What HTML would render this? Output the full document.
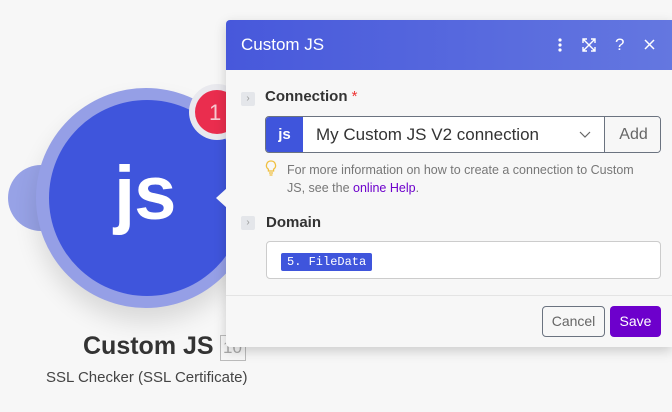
<!DOCTYPE html>
<html><head><style>
*{box-sizing:border-box;margin:0;padding:0}
body{width:672px;height:412px;overflow:hidden;background:#f7f7f7;font-family:"Liberation Sans",sans-serif;position:relative}
.abs{position:absolute}
</style></head><body>
<div class="abs" style="left:8px;top:165px;width:66px;height:66px;border-radius:50%;background:#97a2e6"></div>
<div class="abs" style="left:36px;top:88px;width:220px;height:220px;border-radius:50%;background:#959fe6;box-shadow:0 14px 24px rgba(0,0,0,.12)"></div>
<div class="abs" style="left:49px;top:100px;width:196px;height:196px;border-radius:50%;background:#3f55dc"></div>
<div class="abs" style="left:114px;top:150px;color:#fff;font-weight:bold;font-size:76px;letter-spacing:-1px">js</div>
<div class="abs" style="left:189px;top:84px;width:56px;height:56px;border-radius:50%;background:#e9e9ee"></div>
<div class="abs" style="left:195px;top:90px;width:44px;height:44px;border-radius:50%;background:#ea2d4e;color:#f7c9d1;font-size:22px;padding:10px 0 0 14px">1</div>
<div class="abs" style="left:83px;top:332px;font-size:25px;font-weight:bold;color:#333">Custom JS</div>
<div class="abs" style="left:220px;top:335px;width:26px;height:26px;border:1px solid #bbb;color:#aaa;font-size:17px;padding:2px 0 0 2px">10</div>
<div class="abs" style="left:46px;top:369px;font-size:15px;color:#444">SSL Checker (SSL Certificate)</div>

<div class="abs" style="left:226px;top:20px;width:446px;height:327px;background:#f7f7f7;box-shadow:0 4px 12px rgba(0,0,0,.18);border-radius:4px 0 0 4px;overflow:hidden">
 <div style="height:50px;background:linear-gradient(90deg,#4758db,#6477e0);color:#fff;font-size:17px;padding:15px 0 0 15px;position:relative">Custom JS
  <svg class="abs" style="left:332px;top:18px" width="4" height="14" viewBox="0 0 4 14" fill="#fff"><circle cx="2" cy="2" r="1.6"/><circle cx="2" cy="7" r="1.6"/><circle cx="2" cy="12" r="1.6"/></svg>
  <svg class="abs" style="left:356px;top:18px" width="14" height="14" viewBox="0 0 14 14" fill="none" stroke="#fff" stroke-width="1.4"><path d="M1 5V1h4M9 1h4v4M13 9v4H9M5 13H1V9M1 1l12 12M13 1L1 13"/></svg>
  <span class="abs" style="left:389px;top:15px;font-size:17px">?</span>
  <svg class="abs" style="left:418px;top:19px" width="11" height="11" viewBox="0 0 11 11" stroke="#fff" stroke-width="1.5"><path d="M1 1l9 9M10 1L1 10"/></svg>
 </div>
 <div class="abs" style="left:15px;top:72px;width:14px;height:14px;background:#e4e6ea;border-radius:2px;color:#999;font-size:10px;text-align:center;line-height:14px">›</div>
 <div class="abs" style="left:39px;top:68px;font-size:15px;font-weight:bold;color:#333">Connection <span style="color:#e33;font-weight:normal">*</span></div>
 <div class="abs" style="left:39px;top:96px;width:396px;height:37px;border:1px solid #6b7380;border-radius:4px;background:#fff;overflow:hidden">
  <div class="abs" style="left:0;top:0;width:37px;height:35px;background:#3f55dc;color:#fff;font-weight:bold;font-size:15px;text-align:center;line-height:35px">js</div>
  <div class="abs" style="left:50px;top:8px;font-size:17px;color:#333">My Custom JS V2 connection</div>
  <svg class="abs" style="left:313px;top:14px" width="12" height="8" viewBox="0 0 12 8" fill="none" stroke="#666" stroke-width="1.2"><path d="M1 1l5 5 5-5"/></svg>
  <div class="abs" style="left:338px;top:0;width:58px;height:35px;border-left:1px solid #6b7380;background:#f7f7f7;color:#666;font-size:16px;text-align:center;line-height:35px">Add</div>
 </div>
 <svg class="abs" style="left:39px;top:140px" width="12" height="16" viewBox="0 0 12 16" fill="none" stroke="#f0c040" stroke-width="1.3"><path d="M6 1a4.5 4.5 0 0 0-2.6 8.2V11h5.2V9.2A4.5 4.5 0 0 0 6 1zM4 13h4M4.5 15h3"/></svg>
 <div class="abs" style="left:61px;top:141px;width:362px;font-size:12.5px;color:#777;line-height:18px">For more information on how to create a connection to Custom JS, see the <span style="color:#6d00cc">online Help</span>.</div>
 <div class="abs" style="left:15px;top:196px;width:14px;height:14px;background:#e4e6ea;border-radius:2px;color:#999;font-size:10px;text-align:center;line-height:14px">›</div>
 <div class="abs" style="left:40px;top:194px;font-size:15px;font-weight:bold;color:#333">Domain</div>
 <div class="abs" style="left:40px;top:221px;width:395px;height:38px;border:1px solid #ccc;border-radius:4px;background:#fff">
  <div class="abs" style="left:14px;top:11px;height:18px;padding:0 6px;background:#3f55dc;border-radius:2px;color:#fff;font-family:'Liberation Mono',monospace;font-size:12px;line-height:18px">5. FileData</div>
 </div>
 <div class="abs" style="left:0;top:275px;width:446px;height:1px;background:#e4e4e4"></div>
 <div class="abs" style="left:316px;top:286px;width:63px;height:31px;border:1px solid #6b7380;border-radius:4px;color:#666;font-size:14px;text-align:center;line-height:29px">Cancel</div>
 <div class="abs" style="left:384px;top:286px;width:51px;height:31px;background:#6d00cc;border-radius:4px;color:#fff;font-size:14px;text-align:center;line-height:31px">Save</div>
</div>
<div class="abs" style="left:216px;top:188px;width:0;height:0;border-top:10px solid transparent;border-bottom:10px solid transparent;border-right:11px solid #f7f7f7"></div>
</body></html>
